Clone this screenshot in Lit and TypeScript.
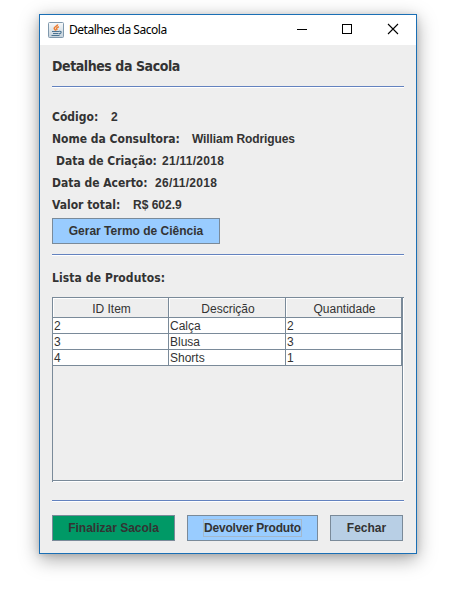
import { LitElement, html, css } from "lit";
import { customElement } from "lit/decorators.js";

const fields = [
  { key: "codigo", label: "Código:", value: "2" },
  { key: "nome", label: "Nome da Consultora:", value: "William Rodrigues" },
  { key: "criacao", label: "Data de Criação:", value: "21/11/2018" },
  { key: "acerto", label: "Data de Acerto:", value: "26/11/2018" },
  { key: "total", label: "Valor total:", value: "R$ 602.9" },
];
const columns = ["ID Item", "Descrição", "Quantidade"];
const rows = [
  ["2", "Calça", "2"],
  ["3", "Blusa", "3"],
  ["4", "Shorts", "1"],
];

@customElement("app-root")
export class AppRoot extends LitElement {
  static styles = css`
    :host {
      display: block;
      box-sizing: border-box;
      height: 590px;
      padding: 14px 38px 36px 39px;
      background: #fff;
      overflow: hidden;
      color: #333;
      font: 12px/16px "Liberation Sans", Arial, sans-serif;
    }
    .window {
      box-sizing: border-box;
      width: 378px;
      height: 540px;
      border: 1px solid #1a6fb5;
      background: #eee;
      box-shadow: 0 5px 18px rgba(0, 0, 0, 0.36), 0 1px 6px rgba(0, 0, 0, 0.12);
    }
    .titlebar {
      display: flex;
      align-items: center;
      height: 30px;
      background: #fff;
      padding-left: 8px;
    }
    .title {
      flex: 1;
      margin-left: 5px;
      color: #000;
      font: 12px/16px "Noto Sans", sans-serif;
      letter-spacing: -0.47px;
      white-space: nowrap;
    }
    .java { width: 16px; height: 16px; }
    .controls { display: flex; }
    .control { width: 45px; height: 30px; display: block; }
    .content {
      padding: 0 12px;
      display: flex;
      flex-direction: column;
      white-space: nowrap;
    }
    .label {
      font-family: "DejaVu Sans Condensed", "DejaVu Sans", sans-serif;
      font-stretch: condensed;
      font-weight: 700;
      font-size: 12px;
      line-height: 22px;
    }
    .heading {
      font-size: 14px;
      line-height: 20px;
      margin: 11px 0 10px;
      letter-spacing: -0.43px;
    }
    .separator {
      width: 352px;
      height: 1px;
      background: #6382bf;
      border-bottom: 1px solid #fff;
    }
    .fields { margin-top: 18px; }
    .field { display: flex; height: 22px; align-items: baseline; }
    .value { font-weight: 700; line-height: 22px; }
    .codigo .label { width: 59px; }
    .nome .label { width: 140px; }
    .nome .value { letter-spacing: -0.1px; }
    .criacao { padding-left: 4px; }
    .criacao .label { width: 106px; }
    .acerto .label { width: 103px; }
    .criacao .value, .acerto .value { letter-spacing: 0.27px; }
    .total .label { width: 81px; }
    .button {
      box-sizing: border-box;
      height: 26px;
      padding: 0;
      border: 1px solid #7a8a99;
      background: #9cf;
      color: #333;
      font: 700 12px/16px "Liberation Sans", Arial, sans-serif;
      display: flex;
      align-items: center;
      justify-content: center;
    }
    .term { width: 168px; margin: 2px 0 10px; }
    .finish { width: 123px; background: #009966; }
    .giveback { width: 131px; }
    .close { width: 73px; background: #b8cfe5; }
    .focus {
      box-sizing: border-box;
      width: 99px;
      height: 18px;
      line-height: 17px;
      letter-spacing: -0.2px;
      border: 1px solid #a3b8cc;
    }
    .list { margin: 11px 0 8px; letter-spacing: 0.1px; }
    .pane {
      box-sizing: border-box;
      width: 352px;
      height: 185px;
      border: 1px solid #7a8a99;
      border-right: 0;
      border-bottom: 0;
      box-shadow: inset -1px -1px #fff, inset -2px -2px #7a8a99;
      margin-bottom: 18px;
    }
    .table {
      display: grid;
      grid-template-columns: 116px 117px 116px;
      width: 349px;
    }
    .head, .cell {
      box-sizing: border-box;
      border-right: 1px solid #7a8a99;
      border-bottom: 1px solid #7a8a99;
    }
    .head {
      height: 20px;
      line-height: 22px;
      text-align: center;
      box-shadow: inset 1px 1px #fff;
      padding-left: 2px;
    }
    .cell {
      height: 16px;
      line-height: 17px;
      background: #fff;
      padding-left: 1px;
    }
    .actions { display: flex; gap: 12px; margin-top: 13px; }
  `;

  render() {
    return html`
      <main class="window">
        <header class="titlebar">
          <svg class="java" viewBox="0 0 16 16">
            <defs>
              <linearGradient id="plate" x2="0" y2="1">
                <stop stop-color="#f8fafb" />
                <stop offset="1" stop-color="#c3d0da" />
              </linearGradient>
            </defs>
            <rect x=".5" y=".5" width="15" height="15" rx="1" fill="url(#plate)" stroke="#8099ad" />
            <path d="M9.6 2.4C9.9 4.2 5.8 4.6 6.2 6.4c.1.8.9 1.2 1.5 2.2M10.9 4.8C8 5.8 8.2 6.6 9.2 8.2" fill="none" stroke="#ed7d31" stroke-width="1.5" />
            <path d="M4 9.5h7M5 11.5h5.5M3.5 13.5h8M11 9.3c3.2-.5 2.7 2.1 0 2.6" fill="none" stroke="#4b7391" stroke-width="1.1" />
          </svg>
          <div class="title">Detalhes da Sacola</div>
          <div class="controls">
            <svg class="control" viewBox="0 0 45 30"><path d="M16 14.5h10" stroke="#000" /></svg>
            <svg class="control" viewBox="0 0 45 30"><rect x="16.5" y="9.5" width="9" height="9" fill="none" stroke="#000" /></svg>
            <svg class="control" viewBox="0 0 45 30"><path d="M17 9l10 10M27 9L17 19" stroke="#000" stroke-width="1.1" /></svg>
          </div>
        </header>
        <section class="content">
          <div class="label heading">Detalhes da Sacola</div>
          <div class="separator"></div>
          <div class="fields">
            ${fields.map(
              (f) => html`<div class="field ${f.key}">
                <span class="label">${f.label}</span><span class="value">${f.value}</span>
              </div>`
            )}
          </div>
          <button class="button term">Gerar Termo de Ciência</button>
          <div class="separator"></div>
          <div class="label list">Lista de Produtos:</div>
          <div class="pane">
            <div class="table">
              ${columns.map((c) => html`<div class="head">${c}</div>`)}
              ${rows.map((r) => r.map((c) => html`<div class="cell">${c}</div>`))}
            </div>
          </div>
          <div class="separator"></div>
          <div class="actions">
            <button class="button finish">Finalizar Sacola</button>
            <button class="button giveback"><span class="focus">Devolver Produto</span></button>
            <button class="button close">Fechar</button>
          </div>
        </section>
      </main>
    `;
  }
}
